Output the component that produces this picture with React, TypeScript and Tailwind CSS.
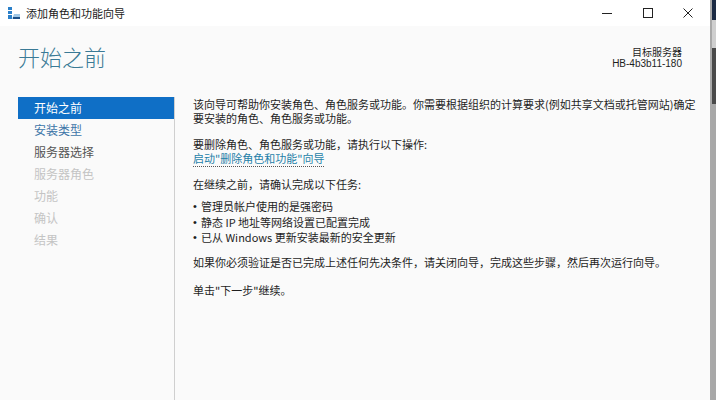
import React from 'react';

const cjk = { fontFamily: '"Noto Sans CJK SC", "Noto Sans", sans-serif' };

function WizardIcon() {
  return (
    <svg width="14" height="14" viewBox="0 0 14 14">
      <rect x="1" y="1" width="4" height="3" fill="#2a7fc9" />
      <rect x="1" y="5" width="4" height="3" fill="#2a7fc9" />
      <rect x="1" y="9" width="4" height="4" fill="#2a7fc9" />
      <path d="M5 13 L7 8 L13 8 L13 13 Z" fill="#9fc7e6" />
      <rect x="6" y="11" width="7" height="2" fill="#1b4f86" />
    </svg>
  );
}

function TitleBar() {
  return (
    <div className="h-[26px] bg-white flex items-center shrink-0">
      <div className="pl-[7px] pr-[5px] flex items-center">
        <WizardIcon />
      </div>
      <span className="text-[11px] text-[#1a1a1a]" style={cjk}>添加角色和功能向导</span>
      <div className="ml-auto flex items-center h-full">
        <div className="w-[46px] h-full flex items-center justify-center">
          <svg width="10" height="10" viewBox="0 0 10 10"><path d="M0 5.5 H10" stroke="#222" strokeWidth="1" /></svg>
        </div>
        <div className="w-[36px] h-full flex items-center justify-center">
          <svg width="10" height="10" viewBox="0 0 10 10"><rect x="0.5" y="0.5" width="9" height="9" fill="none" stroke="#222" strokeWidth="1" /></svg>
        </div>
        <div className="w-[44px] h-full flex items-center justify-center">
          <svg width="10" height="10" viewBox="0 0 10 10"><path d="M0.5 0.5 L9.5 9.5 M9.5 0.5 L0.5 9.5" stroke="#222" strokeWidth="1" /></svg>
        </div>
      </div>
    </div>
  );
}

const steps = [
  { label: '开始之前', state: 'active' },
  { label: '安装类型', state: 'link' },
  { label: '服务器选择', state: 'normal' },
  { label: '服务器角色', state: 'disabled' },
  { label: '功能', state: 'disabled' },
  { label: '确认', state: 'disabled' },
  { label: '结果', state: 'disabled' },
];

function StepNav() {
  return (
    <div className="w-[174px] shrink-0 pl-[18px]" style={cjk}>
      {steps.map((s) => (
        <div
          key={s.label}
          className={
            'h-[22px] pl-[16px] flex items-center text-[12px] ' +
            (s.state === 'active'
              ? 'bg-[#0f6fc6] text-white'
              : s.state === 'link'
              ? 'text-[#3d75a8]'
              : s.state === 'normal'
              ? 'text-[#555555]'
              : 'text-[#c4c4c4]')
          }
        >
          {s.label}
        </div>
      ))}
    </div>
  );
}

function Bullet({ children }: { children: React.ReactNode }) {
  return (
    <li className="flex">
      <span className="w-[8px] shrink-0" style={{ fontFamily: '"Liberation Sans", sans-serif' }}>•</span>
      <span>{children}</span>
    </li>
  );
}

function Content() {
  return (
    <div className="flex-1 border-l border-[#cfcfcf] pl-[18px] pt-0 text-[11px] leading-[14px] text-[#1e1e1e]" style={cjk}>
      <p>
        该向导可帮助你安装角色、角色服务或功能。你需要根据组织的计算要求(例如共享文档或托管网站)确定
        <br />
        要安装的角色、角色服务或功能。
      </p>
      <p className="mt-[12px]">要删除角色、角色服务或功能，请执行以下操作:</p>
      <p>
        <span className="text-[#1f7fa8] border-b border-dotted border-[#555]">启动"删除角色和功能"向导</span>
      </p>
      <p className="mt-[12px]">在继续之前，请确认完成以下任务:</p>
      <ul className="mt-[8px] leading-[15.5px]">
        <Bullet>管理员帐户使用的是强密码</Bullet>
        <Bullet>静态 IP 地址等网络设置已配置完成</Bullet>
        <Bullet>已从 Windows 更新安装最新的安全更新</Bullet>
      </ul>
      <p className="mt-[9px]">如果你必须验证是否已完成上述任何先决条件，请关闭向导，完成这些步骤，然后再次运行向导。</p>
      <p className="mt-[14px]">单击"下一步"继续。</p>
    </div>
  );
}

export default function App() {
  return (
    <div className="w-[716px] h-[400px] flex overflow-hidden">
      <div className="w-[712px] h-full flex flex-col bg-[#fafafa] border-r-2 border-[#a9a9a9]">
        <TitleBar />
        <div className="h-[71px] shrink-0 flex items-start justify-between pl-[18px] pr-[28px]">
          <h1 className="mt-[16px] text-[22px] leading-[28px] text-[#3a7a96] font-light" style={cjk}>开始之前</h1>
          <div className="mt-[20px] text-right text-[10px] leading-[12px] text-[#1e1e1e]" style={cjk}>
            <div>目标服务器</div>
            <div style={{ fontFamily: '"Liberation Sans", sans-serif' }}>HB-4b3b11-180</div>
          </div>
        </div>
        <div className="flex-1 flex">
          <StepNav />
          <Content />
        </div>
      </div>
      <div className="flex-1 flex flex-col">
        <div className="h-[20px] bg-[#1b2a44]" />
        <div className="h-[28px] bg-[#cfcfcf]" />
        <div className="h-[56px] bg-[#4a4a4a]" />
        <div className="flex-1 bg-[#a8a8a8]" />
      </div>
    </div>
  );
}
